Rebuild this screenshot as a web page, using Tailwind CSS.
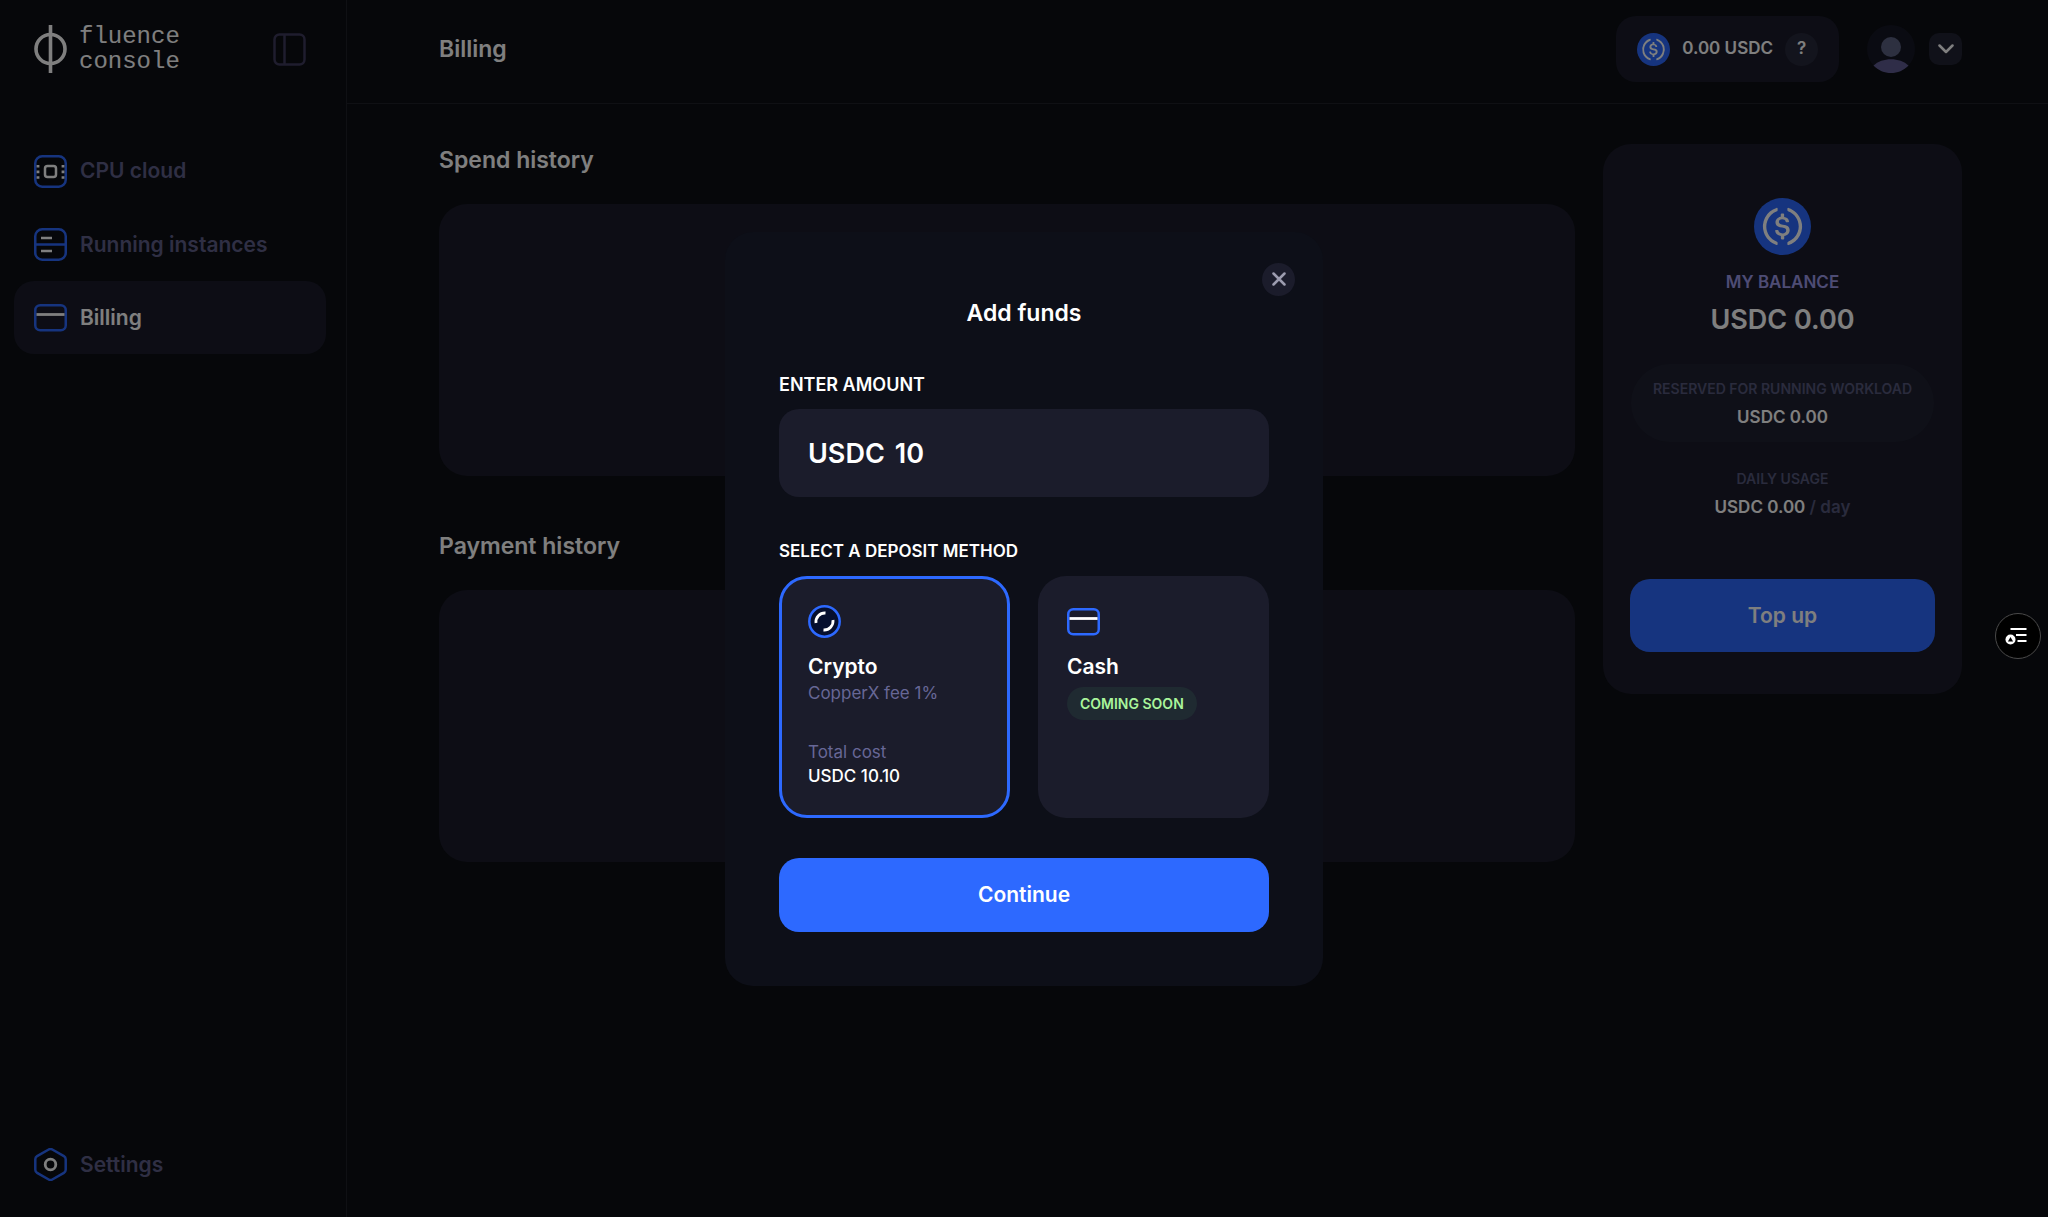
<!DOCTYPE html>
<html lang="en">
<head>
<meta charset="utf-8">
<meta name="viewport" content="width=device-width, initial-scale=1">
<title>Fluence Console – Billing</title>
<script src="https://cdn.jsdelivr.net/npm/@tailwindcss/browser@4"></script>
</head>
<body class="min-h-screen bg-[#0c0e14] font-['Inter',sans-serif] font-semibold text-white">
<svg class="hidden" aria-hidden="true">
  <symbol id="usdc" viewBox="0 0 32 32">
    <circle cx="16" cy="16" r="16" fill="#2d69ff"/>
    <path fill="currentColor" d="M20.022 18.124c0-2.124-1.28-2.852-3.84-3.156-1.828-.243-2.193-.728-2.193-1.578 0-.85.61-1.396 1.828-1.396 1.097 0 1.707.364 2.011 1.275a.458.458 0 00.427.303h.975a.416.416 0 00.427-.425v-.06a3.04 3.04 0 00-2.743-2.489V9.142c0-.243-.183-.425-.487-.486h-.915c-.243 0-.426.182-.487.486v1.396c-1.829.242-2.986 1.456-2.986 2.974 0 2.002 1.218 2.791 3.778 3.095 1.707.303 2.255.668 2.255 1.639 0 .97-.853 1.638-2.011 1.638-1.585 0-2.133-.667-2.316-1.578-.06-.242-.244-.364-.427-.364h-1.036a.416.416 0 00-.426.425v.06c.243 1.518 1.219 2.61 3.23 2.914v1.457c0 .242.183.425.487.485h.915c.243 0 .426-.182.487-.485V21.34c1.829-.303 3.047-1.578 3.047-3.217z"/>
    <path fill="currentColor" d="M12.892 24.497c-4.754-1.7-7.192-6.98-5.424-11.653.914-2.55 2.925-4.491 5.424-5.402.244-.121.365-.303.365-.607v-.85c0-.242-.121-.424-.365-.485-.061 0-.183 0-.244.06a10.895 10.895 0 00-7.13 13.717c1.096 3.4 3.717 6.01 7.13 7.102.244.121.488 0 .548-.243.061-.06.061-.122.061-.243v-.85c0-.182-.182-.424-.365-.546zm6.46-18.936c-.244-.122-.488 0-.548.242-.061.061-.061.122-.061.243v.85c0 .243.182.485.365.607 4.754 1.7 7.192 6.98 5.424 11.653-.914 2.55-2.925 4.491-5.424 5.402-.244.121-.365.303-.365.607v.85c0 .242.121.424.365.485.061 0 .183 0 .244-.06a10.895 10.895 0 007.13-13.717c-1.096-3.46-3.778-6.07-7.13-7.162z"/>
  </symbol>
  <symbol id="card" viewBox="0 0 33 33">
    <rect x="1.25" y="4.25" width="30.5" height="25" rx="5" fill="none" stroke="#2d69ff" stroke-width="2.5"/>
    <path d="M2.500 13.500h28" stroke="currentColor" stroke-width="2.800"/>
  </symbol>
</svg>

<div class="flex min-h-screen">
  <aside class="flex w-[347px] shrink-0 flex-col border-r border-[#1e2028] pr-5 pb-4 pl-3.5">
    <div class="flex items-center justify-between pt-6 pr-5 pl-5">
      <a href="#" class="flex items-center gap-3 font-['Liberation_Mono',monospace] text-2xl leading-[25px] font-normal">
        <svg class="h-12 w-[33px]" viewBox="0 0 33 48" fill="none" stroke="currentColor" stroke-width="3.600"><circle cx="16.500" cy="24" r="14.500"/><path d="M16.500 0v48"/></svg>
        <span>fluence<br>console</span>
      </a>
      <button type="button" aria-label="Collapse sidebar" class="text-[#3e3b5c]">
        <svg class="size-[33px]" viewBox="0 0 33 33" fill="none" stroke="currentColor" stroke-width="2.500"><rect x="1.500" y="1.500" width="30" height="30" rx="5"/><path d="M11.500 1.500v30"/></svg>
      </button>
    </div>
    <nav class="mt-[60px] flex flex-1 flex-col text-[21px] text-[#5e5e88]">
      <a href="#" class="flex h-[74px] items-center gap-[13px] px-5">
        <svg class="size-[33px]" viewBox="0 0 33 33" fill="none"><rect x="1.250" y="1.250" width="30.500" height="30.500" rx="7" stroke="#2d69ff" stroke-width="2.500"/><rect x="11" y="11" width="11" height="11" rx="2.500" stroke="#fff" stroke-width="2.500"/><path d="M4 10v14M29 10v14" stroke="#fff" stroke-width="2.800" stroke-dasharray="2.600 3"/></svg>
        CPU cloud
      </a>
      <a href="#" class="flex h-[73px] items-center gap-[13px] px-5">
        <svg class="size-[33px]" viewBox="0 0 33 33" fill="none"><rect x="1.250" y="1.250" width="30.500" height="30.500" rx="7" stroke="#2d69ff" stroke-width="2.500"/><path d="M1 16.500h31" stroke="#2d69ff" stroke-width="2.500"/><path d="M7 10h11M7 23h11" stroke="#fff" stroke-width="2.500"/></svg>
        Running instances
      </a>
      <a href="#" aria-current="page" class="flex h-[73px] items-center gap-[13px] rounded-[20px] bg-[#1a1b2a] px-5 text-white">
        <svg class="size-[33px]"><use href="#card"/></svg>
        Billing
      </a>
      <a href="#" class="mt-auto flex h-[73px] items-center gap-[13px] px-5">
        <svg class="size-[33px]" viewBox="0 0 33 33" fill="none"><path d="M14.700 1.500a3.600 3.600 0 0 1 3.600 0l11.600 6.600a3.600 3.600 0 0 1 1.800 3.100v10.600a3.600 3.600 0 0 1-1.800 3.100l-11.600 6.600a3.600 3.600 0 0 1-3.600 0l-11.600-6.600a3.600 3.600 0 0 1-1.800-3.100v-10.600a3.600 3.600 0 0 1 1.800-3.100z" stroke="#2d69ff" stroke-width="2.500"/><circle cx="16.500" cy="16.500" r="5.300" stroke="#fff" stroke-width="2.800"/></svg>
        Settings
      </a>
    </nav>
  </aside>

  <div class="min-w-0 flex-1">
    <header class="flex h-[104px] items-center justify-between border-b border-[#1e2028] pr-[86px] pb-[5px] pl-[92px]">
      <h1 class="text-[23px]">Billing</h1>
      <div class="flex items-center">
        <div class="flex h-[66px] items-center gap-3 rounded-[20px] bg-[#1a1b2a] px-[21px] text-[17px]">
          <svg class="size-[33px]"><use href="#usdc"/></svg>
          <span>0.00 USDC</span>
          <button type="button" aria-label="Help" class="size-[33px] rounded-full bg-[#27283a]">?</button>
        </div>
        <svg class="ml-7 size-12" viewBox="0 0 48 48"><circle cx="24" cy="24" r="24" fill="#151724"/><circle cx="24" cy="22" r="10" fill="#5a6080"/><path d="M6.500 40.500C15 32 33 32 41.500 40.500 32 50.500 16 50.500 6.500 40.500z" fill="#5f5b90"/></svg>
        <button type="button" aria-label="Account menu" class="ml-3.5 flex h-8 w-[33px] items-center justify-center rounded-[10px] bg-[#202232]">
          <svg class="h-3 w-4" viewBox="0 0 16 12" fill="none" stroke="currentColor" stroke-width="2.500" stroke-linecap="round" stroke-linejoin="round"><path d="M1.500 2.500 8 9l6.500-6.500"/></svg>
        </button>
      </div>
    </header>

    <main class="flex items-start gap-7 pt-10 pr-[86px] pl-[92px]">
      <div class="min-w-0 flex-1">
        <section>
          <h2 class="text-[23px] leading-8">Spend history</h2>
          <div class="mt-7 h-[272px] rounded-[28px] bg-[#1a1b2a]"></div>
        </section>
        <section class="mt-[54px]">
          <h2 class="text-[23px] leading-8">Payment history</h2>
          <div class="mt-7 h-[272px] rounded-[28px] bg-[#1a1b2a]"></div>
        </section>
      </div>
      <aside class="flex w-[359px] flex-col items-center rounded-[28px] bg-[#1a1b2a] px-[27px] pt-[54px] pb-[42px]">
        <svg class="size-[57px]"><use href="#usdc"/></svg>
        <h2 class="mt-[15px] text-[17px] leading-6 text-[#9c98e8]">MY BALANCE</h2>
        <p class="mt-2 text-[27px] leading-9">USDC 0.00</p>
        <div class="mt-[26px] flex h-[78px] flex-col items-center justify-center rounded-full bg-[#1f2131] px-[22px] pt-0.5">
          <p class="text-sm leading-5 whitespace-nowrap text-[#54577a]">RESERVED FOR RUNNING WORKLOAD</p>
          <p class="mt-1.5 text-[17px] leading-6">USDC 0.00</p>
        </div>
        <p class="mt-[27px] text-sm leading-5 text-[#54577a]">DAILY USAGE</p>
        <p class="mt-1.5 text-[17px] leading-6">USDC 0.00 <span class="text-[#54577a]">/ day</span></p>
        <button type="button" class="mt-[60px] h-[73px] w-full rounded-[20px] bg-[#2d69ff] text-[21px]">Top up</button>
      </aside>
    </main>
  </div>
</div>

<div class="fixed inset-0 flex items-center justify-center bg-black/50">
  <form role="dialog" aria-labelledby="dialog-title" class="relative w-[598px] rounded-[28px] bg-[#0d0f18] p-[54px]">
    <button type="button" aria-label="Close" class="absolute top-[31px] right-7 flex size-[33px] items-center justify-center rounded-full bg-[#1b1c2b] text-[#9c9caf]">
      <svg class="size-3.5" viewBox="0 0 14 14" fill="none" stroke="currentColor" stroke-width="2.500" stroke-linecap="round"><path d="m1.500 1.500 11 11m0-11-11 11"/></svg>
    </button>
    <h2 id="dialog-title" class="text-center text-[23px] leading-[54px]">Add funds</h2>
    <label for="amount" class="mt-[33px] block text-lg leading-6">ENTER AMOUNT</label>
    <div class="mt-3 flex h-[88px] items-center gap-2.5 rounded-[20px] bg-[#1b1c2b] px-[29px] pt-1 text-[27px]">
      <span>USDC</span>
      <input id="amount" type="text" inputmode="decimal" value="10" class="min-w-0 flex-1 bg-transparent outline-none">
    </div>
    <fieldset class="mt-[42px]">
      <legend class="text-[17px] leading-6">SELECT A DEPOSIT METHOD</legend>
      <div class="mt-[13px] grid h-[242px] grid-cols-2 gap-7">
        <label class="flex flex-col rounded-[28px] border-3 border-[#2d69ff] bg-[#1b1c2b] px-[26px] pt-[26px]">
          <input type="radio" name="method" value="crypto" checked class="sr-only">
          <svg class="size-[33px]" viewBox="0 0 33 33" fill="none"><circle cx="16.500" cy="16.500" r="15.200" fill="#060f2e" stroke="#2d69ff" stroke-width="2.500"/><path d="M8 18a9 9 0 0 1 9.500-10M25 15a9 9 0 0 1-9.500 10" stroke="#fff" stroke-width="2.800"/></svg>
          <span class="mt-4 text-[21px] leading-[26px]">Crypto</span>
          <span class="text-[17px] leading-[26px] font-normal text-[#676796]">CopperX fee 1%</span>
          <span class="mt-[34px] text-[17px] leading-6 font-normal text-[#676796]">Total cost</span>
          <span class="text-[17px] leading-6 font-medium">USDC 10.10</span>
        </label>
        <label class="flex flex-col items-start rounded-[28px] bg-[#1b1c2b] px-[29px] pt-[29px]">
          <input type="radio" name="method" value="cash" disabled class="sr-only">
          <svg class="size-[33px]"><use href="#card"/></svg>
          <span class="mt-4 text-[21px] leading-[26px]">Cash</span>
          <span class="mt-[7px] rounded-full bg-[#1f2a31] px-[13px] text-sm leading-[33px] text-[#a9f59b]">COMING SOON</span>
        </label>
      </div>
    </fieldset>
    <button type="submit" class="mt-10 h-[74px] w-full rounded-[20px] bg-[#2d69ff] text-[21px]">Continue</button>
  </form>
</div>

<button type="button" aria-label="Open assistant" class="fixed top-[613px] right-[7px] flex size-[46px] items-center justify-center rounded-full border border-[#4a4a4a] bg-black">
  <svg class="mr-1 h-[18px] w-[22px]" viewBox="0 0 22 18" fill="none"><path d="M5.500 2h16M11 8h10.500M12.500 14h9" stroke="#fff" stroke-width="2"/><circle cx="5.500" cy="12.500" r="5" fill="#fff"/><path d="m5.500 10 2.600 4.500h-5.200z" fill="#000"/></svg>
</button>
</body>
</html>
